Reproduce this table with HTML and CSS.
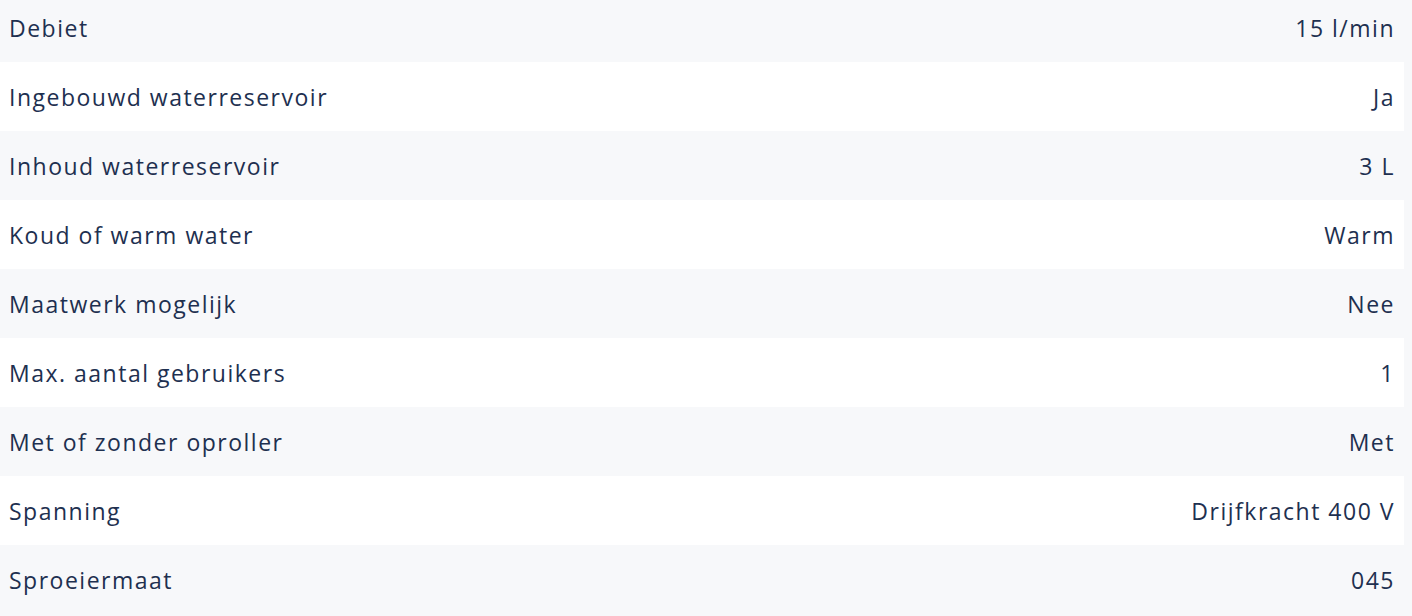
FILE: index.html
```html
<!DOCTYPE html>
<html lang="nl">
<head>
    <meta charset="UTF-8">
    <meta name="viewport" content="width=device-width, initial-scale=1.0">
    <title>Specificaties</title>
    <link rel="stylesheet" href="styles.css">
</head>
<body>
    <!-- Specificaties -->
    <table class="specs">
        <tr><td>Debiet</td><td class="value">15 l/min</td></tr>
        <tr><td>Ingebouwd waterreservoir</td><td class="value">Ja</td></tr>
        <tr><td>Inhoud waterreservoir</td><td class="value">3 L</td></tr>
        <tr><td>Koud of warm water</td><td class="value">Warm</td></tr>
        <tr><td>Maatwerk mogelijk</td><td class="value">Nee</td></tr>
        <tr><td>Max. aantal gebruikers</td><td class="value">1</td></tr>
        <tr><td>Met of zonder oproller</td><td class="value">Met</td></tr>
        <tr><td>Spanning</td><td class="value">Drijfkracht 400 V</td></tr>
        <tr><td>Sproeiermaat</td><td class="value">045</td></tr>
    </table>
</body>
</html>
```

FILE: styles.css
```css
body {
    margin: 0;
    background-color: #f7f8fa;
    font-family: "Open Sans", "Noto Sans", sans-serif;
    color: #1e3050;
    overflow: hidden;
}
.specs {
    width: 1404px;
    margin-top: -7px;
    border-collapse: collapse;
    font-size: 23px;
    letter-spacing: 1.5px;
}
.specs tr {
    height: 69px;
}
.specs tr:nth-child(odd) {
    background-color: #f7f8fa;
}
.specs tr:nth-child(even) {
    background-color: #fff;
}
.specs td {
    padding: 0 10px 0 9px;
    vertical-align: middle;
}
.specs .value {
    text-align: right;
    padding-right: 9px;
}
```
